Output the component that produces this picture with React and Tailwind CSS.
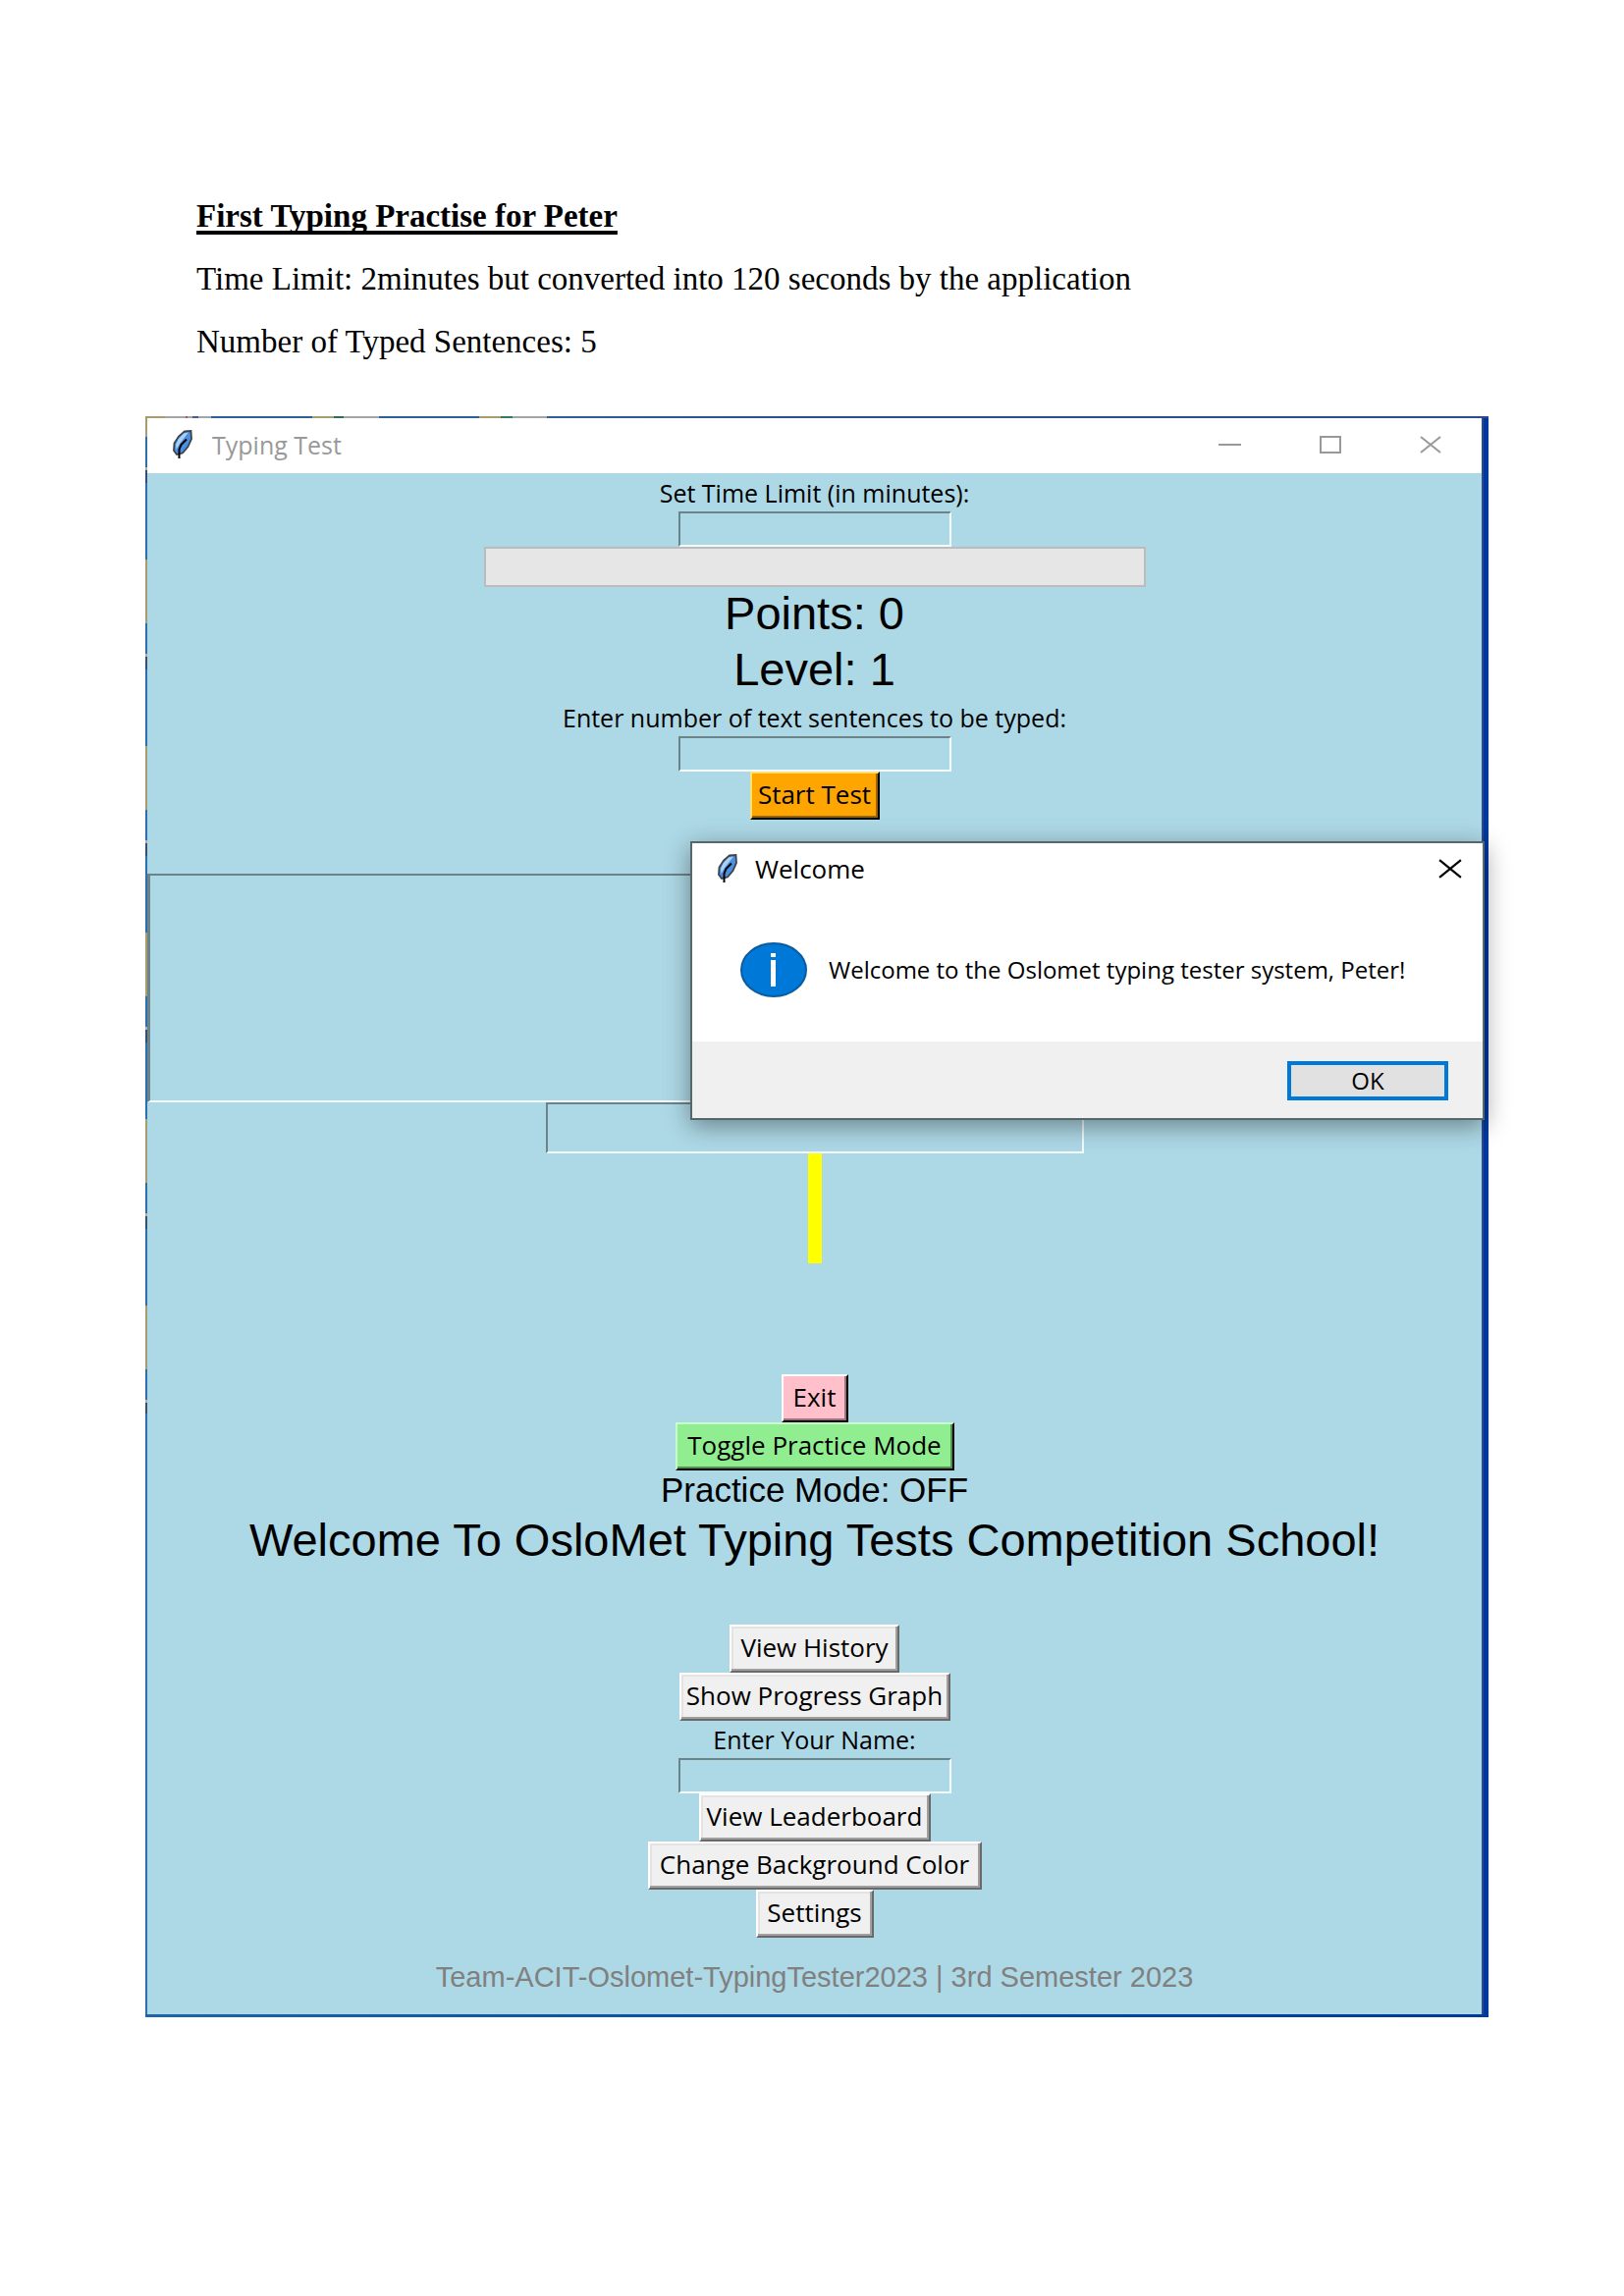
const UI = 'font-["Open_Sans",sans-serif]';
const ARIAL = 'font-["Liberation_Sans",sans-serif]';

function Feather({ className }) {
  return (
    <svg viewBox="0 0 20 30" preserveAspectRatio="none" className={className} aria-hidden="true">
      <path d="M18.500 1 L19 9 L15.500 17 L10 23.500 L4 25 L1 21 L1.500 13.500 L6 6.500 L12 1.500 Z" fill="#4a8fe0" stroke="#3f4349" strokeWidth="1.800" />
      <path d="M16 2.500 L11 3.500 L5.500 9.500 L3 15 L3.500 20 L7 14 Z" fill="#a9d0f5" />
      <path d="M14 9.500 L8.500 15 L6.500 20 L6.500 29" fill="none" stroke="#000" strokeWidth="2" />
    </svg>
  );
}

function Cross({ className }) {
  return (
    <svg viewBox="0 0 22 18" preserveAspectRatio="none" className={className} aria-hidden="true">
      <path d="M1 1 L21 17 M21 1 L1 17" stroke="currentColor" strokeWidth="2" fill="none" />
    </svg>
  );
}

function Entry({ id, label, className = "" }) {
  return (
    <input
      id={id}
      aria-label={label}
      type="text"
      className={`block border-2 border-t-[#6b8389] border-l-[#6b8389] border-b-[#f4fcff] border-r-[#f4fcff] bg-[#add8e6] px-1 outline-none ${className}`}
    />
  );
}

function FieldLabel({ htmlFor, children }) {
  return (
    <label htmlFor={htmlFor} className={`text-[25px] leading-[38px] whitespace-nowrap ${UI}`}>
      {children}
    </label>
  );
}

const tones = {
  orange:
    "bg-[#ffa500] border-t-[#ffe070] border-l-[#ffe070] border-b-black border-r-black shadow-[inset_-2px_-2px_0_#996300]",
  pink: "bg-[#ffc0cb] border-t-white border-l-white border-b-black border-r-black shadow-[inset_-2px_-2px_0_#99737a]",
  green:
    "bg-[#90ee90] border-t-[#c9ffc9] border-l-[#c9ffc9] border-b-black border-r-black shadow-[inset_-2px_-2px_0_#568f56]",
  grey: "bg-[#f0f0f0] border-t-white border-l-white border-b-[#696969] border-r-[#696969] shadow-[inset_-2px_-2px_0_#a0a0a0,inset_2px_2px_0_#e3e3e3]",
};

function TkButton({ tone = "grey", width, children }) {
  return (
    <button
      type="button"
      className={`h-[49px] border-2 pb-1 text-[26px] leading-none whitespace-nowrap text-black ${UI} ${width} ${tones[tone]}`}
    >
      {children}
    </button>
  );
}

function WelcomeDialog() {
  return (
    <section
      role="dialog"
      aria-label="Welcome"
      className="absolute top-[433px] right-1 w-[809px] border-2 border-[#56676c] bg-white shadow-[0_6px_24px_rgba(0,0,0,0.4)]"
    >
      <header className="flex h-14 items-center pr-[21px] pb-1 pl-[26px]">
        <Feather className="h-[30px] w-5" />
        <h2 className={`ml-[18px] flex-1 text-[26px] leading-8 text-black ${UI}`}>Welcome</h2>
        <button type="button" aria-label="Close" className="text-black">
          <Cross className="h-5 w-6" />
        </button>
      </header>
      <div className="flex items-center py-[45px] pl-[49px]">
        <svg viewBox="0 0 68 56" className="h-14 w-[68px] shrink-0" aria-hidden="true">
          <ellipse cx="34" cy="28" rx="33" ry="27" fill="#0078d7" stroke="#0a5ca0" strokeWidth="2" />
          <path d="M31 11h5v4h-5z M31 18h5v27h-5z" fill="#fff" />
        </svg>
        <p className={`ml-[22px] text-2xl leading-8 whitespace-nowrap text-black ${UI}`}>
          Welcome to the Oslomet typing tester system, Peter!
        </p>
      </div>
      <footer className="flex justify-end bg-[#f0f0f0] pt-5 pr-[35px] pb-[18px]">
        <button type="button" className={`h-10 w-[164px] border-4 border-[#0078d7] bg-[#e1e1e1] text-2xl leading-none text-black ${UI}`}>
          OK
        </button>
      </footer>
    </section>
  );
}

export default function App() {
  return (
    <main className="min-h-screen bg-white pt-[188px] pr-[138px] pb-[284px] pl-[148px]">
      <div className='pl-[52px] font-["Liberation_Serif",serif] text-[33px] leading-[64px] text-black'>
        <h1 className="font-bold underline decoration-[4px] underline-offset-[4px] [text-decoration-skip-ink:none]">
          First Typing Practise for Peter
        </h1>
        <p>Time Limit: 2minutes but converted into 120 seconds by the application</p>
        <p>Number of Typed Sentences: 5</p>
      </div>

      <div className="relative mt-11 flex flex-col">
        <div className="h-0.5 bg-[linear-gradient(90deg,#a89b6e_0_20px,#a3a6a8_20px_41px,#b05555_41px_43px,#a3a6a8_43px_48px,#3f5f8c_48px_54px,#a3a6a8_54px_67px,#2c609c_67px_170px,#a89b6e_170px_192px,#2f6b55_192px_202px,#a3a6a8_202px_238px,#2c609c_238px_340px,#a89b6e_340px_362px,#2f7b60_362px_374px,#a3a6a8_374px_409px,#2c609c_409px,#2b4a8f_700px)]" />
        <div className="flex">
          <div className="w-0.5 bg-[linear-gradient(180deg,transparent_0_1014px,#2a6fae_1014px),repeating-linear-gradient(180deg,#a89b6e_0_19px,#2a6fae_19px_50px,#c0a898_50px_53px,#34506e_53px_66px,#2a6fae_66px_144px,#a89b6e_144px_190px)]" />
          <div className="min-w-0 flex-1">
            <header className="flex h-14 items-center bg-white pr-[41px] pb-0.5 pl-[26px] text-[#999]">
              <Feather className="h-[30px] w-5" />
              <h2 className={`ml-5 flex-1 text-[25px] leading-8 ${UI}`}>Typing Test</h2>
              <div className="flex items-center gap-[80px]">
                <button type="button" aria-label="Minimise" className="w-[23px] py-2">
                  <span className="block h-0.5 bg-[#999]" />
                </button>
                <button type="button" aria-label="Maximise" className="h-[18px] w-[22px] border-2 border-[#999]" />
                <button type="button" aria-label="Close">
                  <Cross className="h-[18px] w-[22px]" />
                </button>
              </div>
            </header>

            <div className="flex flex-col items-center bg-[#add8e6] pt-px text-black">
              <FieldLabel htmlFor="limit">Set Time Limit (in minutes):</FieldLabel>
              <Entry id="limit" className="h-9 w-[278px]" />
              <div role="progressbar" aria-label="Time progress" className="h-[41px] w-[674px] border-2 border-[#bcbcbc] bg-[#e6e6e6]" />
              <p className={`pb-1 text-[47px] leading-[53px] ${ARIAL}`}>Points: 0</p>
              <p className={`pb-1 text-[47px] leading-[53px] ${ARIAL}`}>Level: 1</p>
              <FieldLabel htmlFor="sentences">Enter number of text sentences to be typed:</FieldLabel>
              <Entry id="sentences" className="h-9 w-[278px]" />
              <TkButton tone="orange" width="w-[132px]">Start Test</TkButton>
              <textarea
                aria-label="Text to type"
                className="mt-[55px] block h-[233px] w-full resize-none border-y-2 border-l-[3px] border-t-[#6b8389] border-l-[#6b8389] border-b-[#f4fcff] bg-[#add8e6] outline-none"
              />
              <Entry id="typed" label="Typed text" className="h-[52px] w-[548px]" />
              <div className="h-28 w-3.5 bg-[#ffff00]" />
              <div className="mt-[113px] flex flex-col items-center">
                <TkButton tone="pink" width="w-[68px]">Exit</TkButton>
                <TkButton tone="green" width="w-[284px]">Toggle Practice Mode</TkButton>
              </div>
              <p className={`pb-1 text-[35px] leading-10 ${ARIAL}`}>Practice Mode: OFF</p>
              <p className={`pb-1 text-[47px] leading-[53px] whitespace-nowrap ${ARIAL}`}>
                Welcome To OsloMet Typing Tests Competition School!
              </p>
              <div className="mt-14 flex flex-col items-center">
                <TkButton width="w-[173px]">View History</TkButton>
                <TkButton width="w-[276px]">Show Progress Graph</TkButton>
                <FieldLabel htmlFor="name">Enter Your Name:</FieldLabel>
                <Entry id="name" className="h-9 w-[278px]" />
                <TkButton width="w-[236px]">View Leaderboard</TkButton>
                <TkButton width="w-[340px]">Change Background Color</TkButton>
                <TkButton width="w-[120px]">Settings</TkButton>
              </div>
              <p className={`mt-5 pb-[18px] text-[29px] leading-10 text-[#808080] ${ARIAL}`}>
                Team-ACIT-Oslomet-TypingTester2023 | 3rd Semester 2023
              </p>
            </div>
          </div>
          <div className="w-[7px] border-l-2 border-[#2b4a8b] bg-[#0038a0]" />
        </div>
        <div className="h-[3px] bg-[linear-gradient(90deg,#1f63a8,#0a52a4_40%,#003a9a)]" />
        <WelcomeDialog />
      </div>
    </main>
  );
}
